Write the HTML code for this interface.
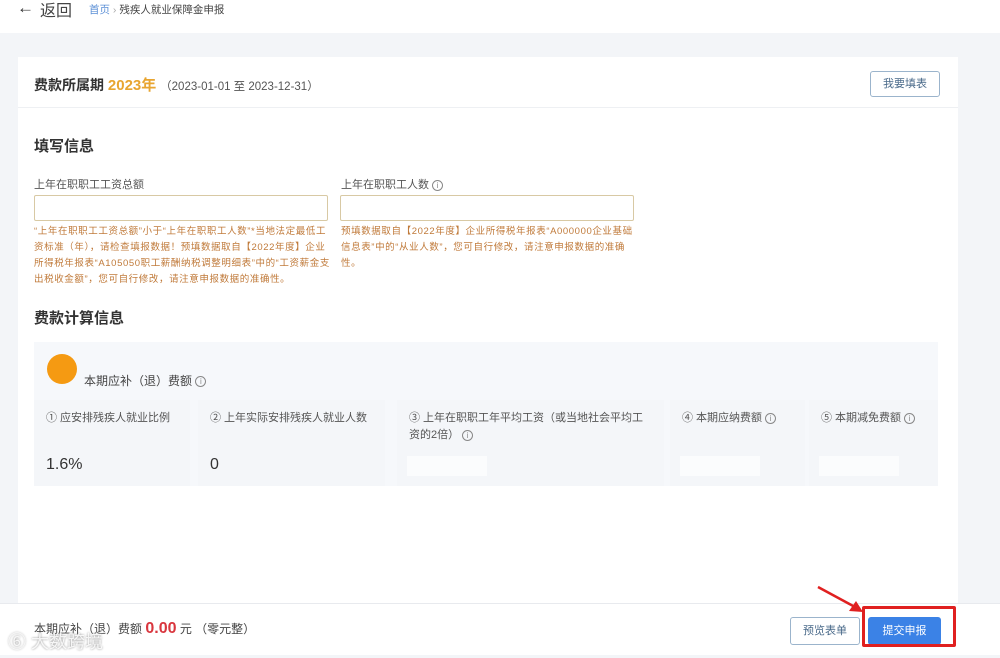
<!DOCTYPE html>
<html><head><meta charset="utf-8"><style>
*{margin:0;padding:0;box-sizing:border-box}
body{width:1000px;height:658px;overflow:hidden;background:#f3f5f8;font-family:"Liberation Sans","Noto Sans CJK SC",sans-serif;color:#333;position:relative}
.abs{position:absolute}
.top{left:0;top:0;width:1000px;height:33px;background:#fff}
.card{left:18px;top:57px;width:940px;height:560px;background:#fff}
.inp{height:26px;border:1px solid #d8c9a4;border-radius:2px;background:#fff}
.hint{font-size:9.5px;line-height:16px;color:#c07a3a;letter-spacing:0.6px}
.info{display:inline-block;width:11px;height:11px;border:1px solid #888;border-radius:50%;font-size:8px;line-height:9px;text-align:center;color:#888;vertical-align:middle}
.cell{top:400px;height:86px;background:#f6f8fb;font-size:11px;color:#555;padding:10px 12px;line-height:17px}
.val{position:absolute;left:12px;top:56px;font-size:16px;color:#333}
.blank{position:absolute;left:10px;top:56px;width:80px;height:20px;background:#fbfcfd}
</style></head><body>
<div class="abs top"></div>
<div class="abs" style="left:17px;top:-2px;font-size:17px;color:#333">←</div>
<div class="abs" style="left:40px;top:-3px;font-size:16px;color:#444">返回</div>
<div class="abs" style="left:89px;top:2px;font-size:10.5px;color:#5b8fd6">首页 <span style="color:#aaa">›</span> <span style="color:#444">残疾人就业保障金申报</span></div>
<div class="abs card"></div>
<div class="abs" style="left:18px;top:107px;width:940px;height:1px;background:#eef0f3"></div>
<div class="abs" style="left:34px;top:74px;font-size:14px;font-weight:bold;color:#333">费款所属期 <span style="color:#e8a531;font-size:15px">2023年</span> <span style="font-weight:normal;font-size:11.5px;color:#555">（2023-01-01 至 2023-12-31）</span></div>
<div class="abs" style="left:870px;top:71px;width:70px;height:26px;border:1px solid #9bb4cc;border-radius:3px;font-size:11px;line-height:24px;text-align:center;color:#4a6a8a">我要填表</div>
<div class="abs" style="left:34px;top:135px;font-size:15px;font-weight:bold;color:#333">填写信息</div>
<div class="abs" style="left:34px;top:176px;font-size:11px;color:#555">上年在职职工工资总额</div>
<div class="abs" style="left:341px;top:176px;font-size:11px;color:#555">上年在职职工人数 <span class="info">i</span></div>
<div class="abs inp" style="left:34px;top:195px;width:294px"></div>
<div class="abs inp" style="left:340px;top:195px;width:294px"></div>
<div class="abs hint" style="left:34px;top:224px;width:298px">“上年在职职工工资总额”小于“上年在职职工人数”*当地法定最低工资标准（年），请检查填报数据！预填数据取自【2022年度】企业所得税年报表“A105050职工薪酬纳税调整明细表”中的“工资薪金支出税收金额”，您可自行修改，请注意申报数据的准确性。</div>
<div class="abs hint" style="left:341px;top:224px;width:298px">预填数据取自【2022年度】企业所得税年报表“A000000企业基础信息表”中的“从业人数”，您可自行修改，请注意申报数据的准确性。</div>
<div class="abs" style="left:34px;top:307px;font-size:15px;font-weight:bold;color:#333">费款计算信息</div>
<div class="abs" style="left:34px;top:342px;width:904px;height:144px;background:#f6f8fb"></div>
<div class="abs" style="left:47px;top:354px;width:30px;height:30px;border-radius:50%;background:#f59a12"></div>
<div class="abs" style="left:84px;top:372px;font-size:12px;color:#444">本期应补（退）费额 <span class="info">i</span></div>
<div class="abs cell" style="left:34px;width:156px;background:#f4f6f9">① 应安排残疾人就业比例<div class="val" style="left:12px">1.6%</div></div>
<div class="abs cell" style="left:198px;width:187px;background:#f4f6f9">② 上年实际安排残疾人就业人数<div class="val">0</div></div>
<div class="abs cell" style="left:397px;width:267px;background:#f4f6f9">③ 上年在职职工年平均工资（或当地社会平均工资的2倍） <span class="info">i</span><div class="blank"></div></div>
<div class="abs cell" style="left:670px;width:135px;background:#f4f6f9">④ 本期应纳费额 <span class="info">i</span><div class="blank"></div></div>
<div class="abs cell" style="left:809px;width:129px;background:#f4f6f9">⑤ 本期减免费额 <span class="info">i</span><div class="blank"></div></div>
<div class="abs" style="left:0;top:603px;width:1000px;height:52px;background:#fff;border-top:1px solid #e8eaee"></div>
<div class="abs" style="left:34px;top:620px;font-size:12px;color:#444">本期应补（退）费额 <span style="color:#d9363e;font-size:16px;font-weight:bold">0.00</span> 元 （零元整）</div>
<div class="abs" style="left:8px;top:628px;font-size:18px;color:rgba(255,255,255,.85);text-shadow:0 0 2px #888">⑥ 大数跨境</div>
<div class="abs" style="left:790px;top:617px;width:70px;height:28px;border:1px solid #9bb4cc;border-radius:3px;font-size:11px;line-height:26px;text-align:center;color:#4a6a8a;background:#fff">预览表单</div>
<div class="abs" style="left:868px;top:617px;width:73px;height:28px;background:#3b82e6;border-radius:3px;font-size:11px;line-height:28px;text-align:center;color:#fff">提交申报</div>
<div class="abs" style="left:862px;top:606px;width:94px;height:41px;border:3px solid #e02020;border-radius:2px"></div>
<svg class="abs" style="left:815px;top:585px" width="50" height="30"><line x1="3" y1="2" x2="40" y2="22" stroke="#e02020" stroke-width="2.5"/><polygon points="48,27 34,26 41,16" fill="#e02020"/></svg>
</body></html>
